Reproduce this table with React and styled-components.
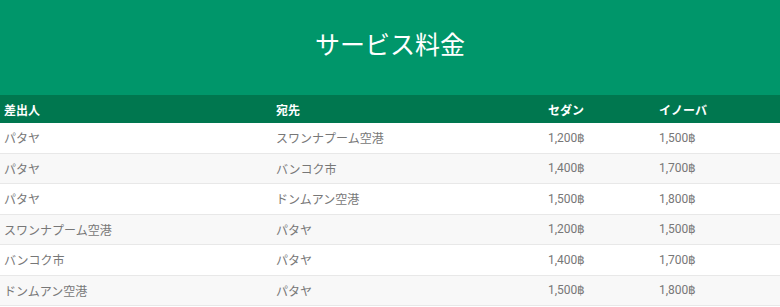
import React from "react";
import styled, { createGlobalStyle } from "styled-components";

const rows = [
  ["パタヤ", "スワンナプーム空港", "1,200฿", "1,500฿"],
  ["パタヤ", "バンコク市", "1,400฿", "1,700฿"],
  ["パタヤ", "ドンムアン空港", "1,500฿", "1,800฿"],
  ["スワンナプーム空港", "パタヤ", "1,200฿", "1,500฿"],
  ["バンコク市", "パタヤ", "1,400฿", "1,700฿"],
  ["ドンムアン空港", "パタヤ", "1,500฿", "1,800฿"],
];

const App = () => {
  return (
    <>
      <GlobalStyle />
      <Page>
        <Hero>
          <Title>サービス料金</Title>
        </Hero>
        <PriceTable>
          <colgroup>
            <col style={{ width: 272 }} />
            <col style={{ width: 272 }} />
            <col style={{ width: 111 }} />
            <col />
          </colgroup>
          <thead>
            <tr>
              <Th>差出人</Th>
              <Th>宛先</Th>
              <Th>セダン</Th>
              <Th>イノーバ</Th>
            </tr>
          </thead>
          <tbody>
            {rows.map((r, i) => (
              <Row key={i} $odd={i % 2 === 1}>
                {r.map((c, j) => (
                  <Td key={j}>{c}</Td>
                ))}
              </Row>
            ))}
          </tbody>
        </PriceTable>
      </Page>
    </>
  );
};

export default App;

const GlobalStyle = createGlobalStyle`
  body {
    margin: 0;
    background: #fff;
    font-family: Roboto, "Noto Sans CJK JP", sans-serif;
  }
`;

const Page = styled.div`
  width: 780px;
`;

const Hero = styled.div`
  height: 95px;
  box-sizing: border-box;
  padding-bottom: 9px;
  background: #00966a;
  display: flex;
  align-items: center;
  justify-content: center;
`;

const Title = styled.h1`
  margin: 0;
  font-size: 25px;
  font-weight: 400;
  color: #fff;
`;

const PriceTable = styled.table`
  width: 100%;
  table-layout: fixed;
  border-collapse: collapse;
`;

const Th = styled.th`
  background: #00774f;
  color: #fff;
  text-align: left;
  font-size: 12px;
  font-weight: 700;
  height: 28px;
  padding: 0 4px;
`;

const Row = styled.tr`
  background: ${(p) => (p.$odd ? "#f8f8f8" : "#fff")};
  border-bottom: 1px solid #e8e8e8;
`;

const Td = styled.td`
  height: 29.5px;
  padding: 0 4px;
  font-size: 12px;
  color: #777;
`;
